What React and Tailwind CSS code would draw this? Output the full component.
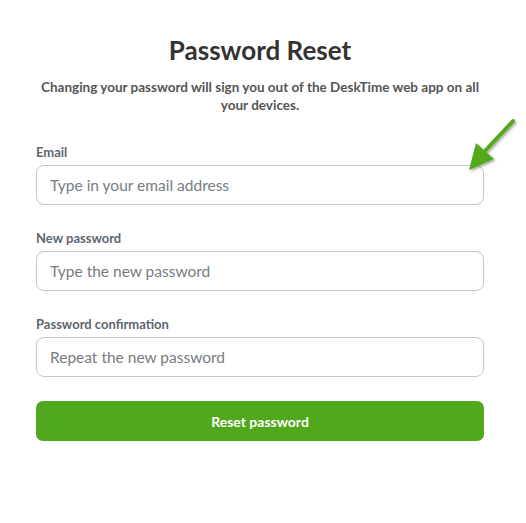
import React from "react";

function Field({ label, placeholder, type = "text" }) {
  return (
    <div className="flex flex-col">
      <label className="text-[13px] font-bold leading-[18px] text-[#5e6670] mb-[4px]">{label}</label>
      <input
        type={type}
        placeholder={placeholder}
        className="h-[40px] w-full rounded-[8px] border border-[#c8c8c8] bg-white px-[13px] text-[15.5px] text-[#333] placeholder:text-[#777c82] outline-none"
      />
    </div>
  );
}

export default function App() {
  return (
    <div className="relative min-h-[523px] w-[526px] bg-white" style={{ fontFamily: "Lato, 'Open Sans', sans-serif" }}>
      <div className="ml-[36px] w-[448px] pt-[34px] flex flex-col">
        <h1 className="text-center text-[26px] font-bold leading-[32px] text-[#333]">Password Reset</h1>
        <p className="mt-[12px] text-center text-[13.5px] font-bold leading-[18px] text-[#555]">
          Changing your password will sign you out of the DeskTime web app on all your devices.
        </p>
        <div className="mt-[29px] flex flex-col gap-[24px]">
          <Field label="Email" placeholder="Type in your email address" type="email" />
          <Field label="New password" placeholder="Type the new password" type="password" />
          <Field label="Password confirmation" placeholder="Repeat the new password" type="password" />
        </div>
        <button className="mt-[24px] h-[40px] w-full rounded-[7px] bg-[#52a81c] text-[14px] font-bold text-white">
          Reset password
        </button>
      </div>
      <svg className="absolute left-[462px] top-[114px]" width="60" height="64" viewBox="0 0 60 64">
        <defs>
          <filter id="sh" x="-30%" y="-30%" width="160%" height="160%">
            <feDropShadow dx="1.5" dy="1.5" stdDeviation="1.2" floodColor="#000" floodOpacity="0.35" />
          </filter>
        </defs>
        <g filter="url(#sh)" fill="#52a81c" stroke="#52a81c">
          <line x1="51" y1="7" x2="22" y2="38" strokeWidth="4" strokeLinecap="round" />
          <polygon points="7,56 14,29 32,45" stroke="none" />
        </g>
      </svg>
    </div>
  );
}
